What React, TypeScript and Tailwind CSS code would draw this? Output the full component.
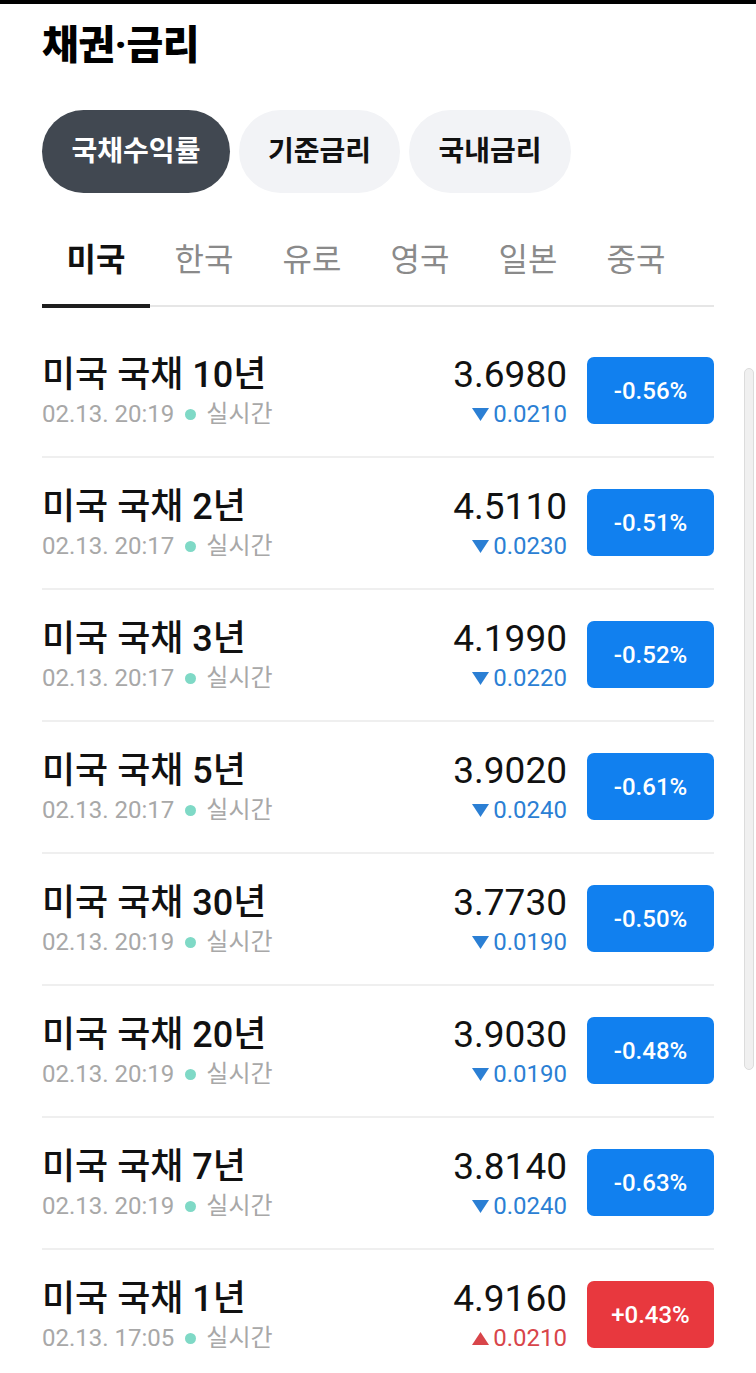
import React from "react";

type Row = { name: string; time: string; value: string; change: string; pct: string; up: boolean };

const rows: Row[] = [
  { name: "미국 국채 10년", time: "02.13. 20:19", value: "3.6980", change: "0.0210", pct: "-0.56%", up: false },
  { name: "미국 국채 2년", time: "02.13. 20:17", value: "4.5110", change: "0.0230", pct: "-0.51%", up: false },
  { name: "미국 국채 3년", time: "02.13. 20:17", value: "4.1990", change: "0.0220", pct: "-0.52%", up: false },
  { name: "미국 국채 5년", time: "02.13. 20:17", value: "3.9020", change: "0.0240", pct: "-0.61%", up: false },
  { name: "미국 국채 30년", time: "02.13. 20:19", value: "3.7730", change: "0.0190", pct: "-0.50%", up: false },
  { name: "미국 국채 20년", time: "02.13. 20:19", value: "3.9030", change: "0.0190", pct: "-0.48%", up: false },
  { name: "미국 국채 7년", time: "02.13. 20:19", value: "3.8140", change: "0.0240", pct: "-0.63%", up: false },
  { name: "미국 국채 1년", time: "02.13. 17:05", value: "4.9160", change: "0.0210", pct: "+0.43%", up: true },
];

const tabs = ["미국", "한국", "유로", "영국", "일본", "중국"];

function Tri({ up }: { up: boolean }) {
  return (
    <svg width="17" height="13" viewBox="0 0 17 13" className="mr-[4px]">
      {up ? (
        <polygon points="8.5,0 17,13 0,13" fill="#d8454a" />
      ) : (
        <polygon points="0,0 17,0 8.5,13" fill="#2b7fd4" />
      )}
    </svg>
  );
}

export default function App() {
  return (
    <div
      className="relative w-[756px] h-[1373px] overflow-hidden bg-white text-black"
      style={{ fontFamily: "Roboto, 'Noto Sans CJK KR', sans-serif" }}
    >
      <div className="h-[4px] bg-black" />
      <div className="px-[42px]">
        <h1 className="pt-[19px] text-[40px] leading-[46px] font-extrabold tracking-[-0.5px]">채권·금리</h1>

        <div className="mt-[41px] flex gap-[9px]">
          <div className="h-[83px] w-[188px] rounded-full bg-[#414851] text-white text-[28px] font-bold flex items-center justify-center">
            국채수익률
          </div>
          <div className="h-[83px] w-[161px] rounded-full bg-[#f2f3f6] text-[#111] text-[28px] font-bold flex items-center justify-center">
            기준금리
          </div>
          <div className="h-[83px] w-[162px] rounded-full bg-[#f2f3f6] text-[#111] text-[28px] font-bold flex items-center justify-center">
            국내금리
          </div>
        </div>

        <div className="mt-[32px] flex border-b-2 border-[#e6e6e6]">
          {tabs.map((t, i) => (
            <div
              key={t}
              className={
                i === 0
                  ? "relative w-[108px] h-[80px] pb-[10px] flex items-center justify-center text-[32px] font-bold text-[#111]"
                  : "relative w-[108px] h-[80px] pb-[10px] flex items-center justify-center text-[32px] text-[#8a8a8a]"
              }
            >
              {t}
              {i === 0 && <div className="absolute left-0 right-0 bottom-[-3px] h-[4px] bg-[#1e1e1e]" />}
            </div>
          ))}
        </div>

        <div className="pt-[19px]">
          {rows.map((r, i) => (
            <div
              key={r.name}
              className={
                i === rows.length - 1
                  ? "flex h-[130px]"
                  : "flex h-[132px] border-b-2 border-[#efefef]"
              }
            >
              <div className="flex-1 pt-[28px]">
                <div className="text-[36px] leading-[42px] font-medium text-[#111]">{r.name}</div>
                <div className="mt-[4px] flex items-center text-[24px] leading-[28px] text-[#a8a8a8]">
                  <span>{r.time}</span>
                  <span className="ml-[11px] mr-[10px] w-[11px] h-[11px] rounded-full bg-[#7fd9c6]" />
                  <span>실시간</span>
                </div>
              </div>
              <div className="pt-[28px] flex flex-col items-end">
                <div className="text-[37px] leading-[42px] text-[#111]">{r.value}</div>
                <div
                  className={
                    r.up
                      ? "mt-[4px] flex items-center text-[24px] leading-[28px] text-[#d8454a]"
                      : "mt-[4px] flex items-center text-[24px] leading-[28px] text-[#2b7fd4]"
                  }
                >
                  <Tri up={r.up} />
                  {r.change}
                </div>
              </div>
              <div className="self-start mt-[31px] ml-[20px]">
                <div
                  className={
                    r.up
                      ? "w-[127px] h-[67px] rounded-[7px] bg-[#e8383e] text-white text-[24px] font-medium flex items-center justify-center"
                      : "w-[127px] h-[67px] rounded-[7px] bg-[#1180ef] text-white text-[24px] font-medium flex items-center justify-center"
                  }
                >
                  {r.pct}
                </div>
              </div>
            </div>
          ))}
        </div>
      </div>

      <div className="absolute left-[744px] top-[368px] w-[10px] h-[702px] rounded-full bg-[#f0f0f0] border border-[#dcdcdc]" />
    </div>
  );
}
